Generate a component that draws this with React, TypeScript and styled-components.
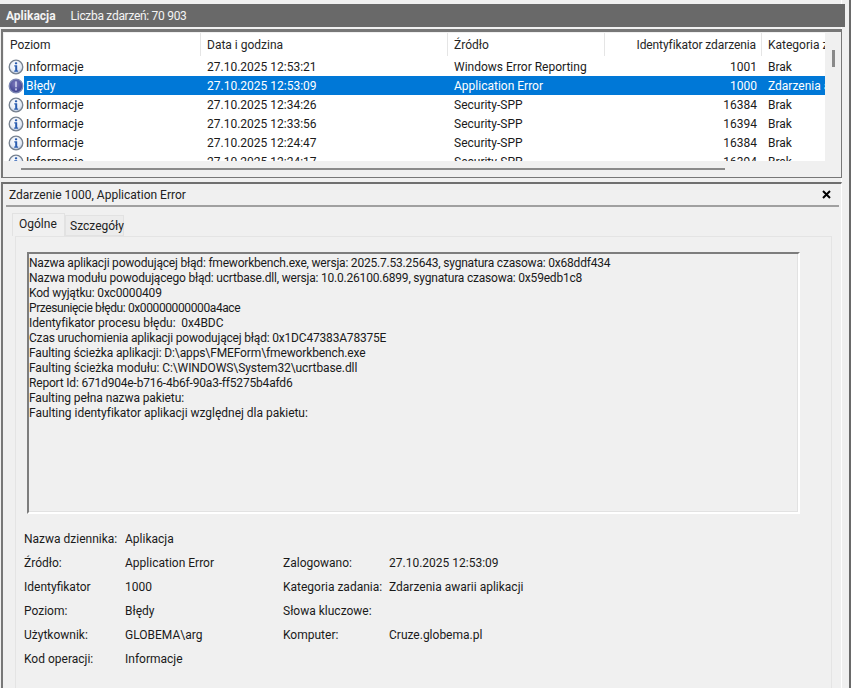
import React from "react";
import styled, { createGlobalStyle } from "styled-components";

const Global = createGlobalStyle`
  html, body { margin: 0; padding: 0; background: #f0f0f0; }
  body { font-family: Roboto, "Noto Sans", "Liberation Sans", sans-serif; font-size: 12px; color: #1a1a1a; }
`;

const Page = styled.div`
  width: 851px;
  height: 688px;
  overflow: hidden;
  background: #f0f0f0;
  display: flex;
  flex-direction: column;
  padding: 4px 6px 0 0;
  box-sizing: border-box;
  border-right: 2px solid #6a6a6a;
  box-shadow: inset -7px 0 0 #f0f0f0, inset -8px 0 0 #fff;
`;

const TitleBar = styled.div`
  height: 23px;
  flex: none;
  background: #696969;
  color: #f4f4f4;
  display: flex;
  align-items: center;
  padding-left: 6px;
  gap: 15px;
  margin-right: -2px;
`;

const TitleStrong = styled.span`
  font-weight: 700;
`;

const TitleCount = styled.span`
  letter-spacing: -0.3px;
`;

const ListPanel = styled.section`
  flex: none;
  height: 149px;
  margin: 2px 1px 0 1px;
  border: 1px solid #777;
  border-top-width: 3px;
  border-left-width: 2px;
  box-sizing: border-box;
  padding: 1px 0 0 1px;
  display: flex;
  flex-direction: column;
`;

const ListRow = styled.div`
  display: flex;
  height: 128px;
  flex: none;
`;

const List = styled.div`
  width: 821px;
  background: #fff;
  overflow: hidden;
  flex: none;
`;

const Header = styled.div`
  display: grid;
  grid-template-columns: 197px 247px 157px 157px 120px;
  height: 24px;
`;

const HeadCell = styled.div<{ $right?: boolean }>`
  height: 23px;
  line-height: 23px;
  padding: ${(p) => (p.$right ? "1px 5px 0 0" : "1px 0 0 6px")};
  text-align: ${(p) => (p.$right ? "right" : "left")};
  letter-spacing: ${(p) => (p.$right ? "-0.09px" : "0")};
  border-right: 1px solid #e5e5e5;
  white-space: nowrap;
  box-sizing: border-box;
  color: #262626;
`;

const Row = styled.div`
  display: flex;
  height: 19px;
  padding-left: 4px;
`;

const IconSlot = styled.div`
  width: 16px;
  height: 19px;
  flex: none;
  display: flex;
  align-items: center;
  justify-content: center;
`;

const Cells = styled.div<{ $sel?: boolean }>`
  display: grid;
  grid-template-columns: 177px 247px 157px 157px 60px;
  flex: 1;
  padding-top: 1px;
  line-height: 18px;
  background: ${(p) => (p.$sel ? "#0078d7" : "transparent")};
  color: ${(p) => (p.$sel ? "#fff" : "#1a1a1a")};
`;

const Cell = styled.div<{ $right?: boolean; $first?: boolean }>`
  white-space: nowrap;
  padding: ${(p) => (p.$right ? "0 5px 0 0" : p.$first ? "0 0 0 2px" : "0 0 0 6px")};
  text-align: ${(p) => (p.$right ? "right" : "left")};
`;

const ScrollTrack = styled.div`
  width: 15px;
  flex: none;
  position: relative;
`;

const ScrollThumb = styled.div`
  position: absolute;
  left: 7px;
  top: 17px;
  width: 3px;
  height: 17px;
  background: #8a8a8a;
`;

const HScrollWrap = styled.div`
  flex: none;
  padding: 7px 0 0 17px;
`;

const HThumb = styled.div`
  width: 704px;
  height: 2px;
  background: #8a8a8a;
`;

const DetailPanel = styled.section`
  flex: 1;
  margin: 4px 1px 0 1px;
  border-top: 2px solid #6f6f6f;
  border-left: 2px solid #777;
  border-right: 1px solid #fff;
  display: flex;
  flex-direction: column;
  min-height: 0;
`;

const DetailHead = styled.div`
  flex: none;
  height: 23px;
  margin: 0 2px 0 3px;
  box-sizing: border-box;
  border-bottom: 2px solid #a0a0a0;
  display: flex;
  justify-content: space-between;
  align-items: center;
  padding: 0 8px 0 3px;
  color: #222;
`;

const Tabs = styled.div`
  flex: none;
  display: flex;
  margin: 6px 0 0 9px;
  height: 23px;
  align-items: flex-end;
`;

const Tab = styled.div<{ $active?: boolean }>`
  width: ${(p) => (p.$active ? 53 : 59)}px;
  height: ${(p) => (p.$active ? 23 : 21)}px;
  line-height: ${(p) => (p.$active ? 21 : 20)}px;
  padding-left: ${(p) => (p.$active ? 6 : 4)}px;
  background: ${(p) => (p.$active ? "#f0f0f0" : "#ececec")};
  border: 1px solid #e2e2e2;
  border-bottom: ${(p) => (p.$active ? "none" : "1px solid #e2e2e2")};
  box-sizing: border-box;
  color: #222;
`;

const TabBody = styled.div`
  flex: none;
  margin-left: 12px;
  width: 817px;
  height: 460px;
  box-sizing: border-box;
  border: 1px solid #e4e4e4;
  padding: 15px 0 0 11px;
`;

const MessageBox = styled.div`
  width: 773px;
  height: 262px;
  box-sizing: border-box;
  border-top: 2px solid #7d7d7d;
  border-left: 2px solid #7d7d7d;
  border-right: 2px solid #fff;
  border-bottom: 2px solid #fff;
  box-shadow: inset -1px -1px 0 #e2e2e2;
  padding-top: 2px;
  line-height: 15px;
  color: #1a1a1a;
`;

const MessageLine = styled.div<{ $track: number }>`
  white-space: pre;
  letter-spacing: ${(p) => p.$track}px;
`;

const Meta = styled.div`
  display: grid;
  grid-template-columns: 101px 158px 106px 1fr;
  grid-auto-rows: 24px;
  margin: 13px 0 0 -3px;
  line-height: 24px;
  color: #1a1a1a;
`;

const MetaText = styled.div`
  white-space: nowrap;
`;

const InfoIcon = () => (
  <svg width="16" height="16" viewBox="0 0 16 16">
    <defs>
      <radialGradient id="inf" cx="45%" cy="35%" r="70%">
        <stop offset="0%" stopColor="#ffffff" />
        <stop offset="60%" stopColor="#e6ecf6" />
        <stop offset="100%" stopColor="#b4c5e0" />
      </radialGradient>
    </defs>
    <circle cx="8" cy="8" r="6.8" fill="url(#inf)" stroke="#76818f" strokeWidth="1.3" />
    <rect x="6.9" y="3.2" width="2.3" height="2.1" rx="0.9" fill="#2a5cb0" />
    <path d="M6.3 6.3h2.9v5.2h.9v1.2H6.2v-1.2h1V7.4h-.9z" fill="#2a5cb0" />
  </svg>
);

const ErrorIcon = () => (
  <svg width="16" height="16" viewBox="0 0 16 16">
    <defs>
      <radialGradient id="err" cx="45%" cy="35%" r="70%">
        <stop offset="0%" stopColor="#7b78bb" />
        <stop offset="70%" stopColor="#4a4c98" />
        <stop offset="100%" stopColor="#3a3e7c" />
      </radialGradient>
    </defs>
    <circle cx="8" cy="8" r="6.8" fill="url(#err)" stroke="#7b86b4" strokeWidth="1.3" />
    <rect x="7.1" y="3.4" width="1.8" height="5.8" fill="#c4c6e6" />
    <rect x="7.1" y="10.4" width="1.8" height="2" fill="#c4c6e6" />
  </svg>
);

const CloseIcon = () => (
  <svg width="9" height="9" viewBox="0 0 9 9">
    <path d="M1 1l7 7M8 1L1 8" stroke="#000" strokeWidth="2" fill="none" />
  </svg>
);

const rows = [
  { lvl: "Informacje", date: "27.10.2025 12:53:21", src: "Windows Error Reporting", id: "1001", cat: "Brak" },
  { lvl: "Błędy", date: "27.10.2025 12:53:09", src: "Application Error", id: "1000", cat: "Zdarzenia awarii aplikacji", sel: true },
  { lvl: "Informacje", date: "27.10.2025 12:34:26", src: "Security-SPP", id: "16384", cat: "Brak" },
  { lvl: "Informacje", date: "27.10.2025 12:33:56", src: "Security-SPP", id: "16394", cat: "Brak" },
  { lvl: "Informacje", date: "27.10.2025 12:24:47", src: "Security-SPP", id: "16384", cat: "Brak" },
  { lvl: "Informacje", date: "27.10.2025 12:24:17", src: "Security-SPP", id: "16394", cat: "Brak" },
];

const message: [string, number][] = [
  ["Nazwa aplikacji powodującej błąd: fmeworkbench.exe, wersja: 2025.7.53.25643, sygnatura czasowa: 0x68ddf434", -0.2],
  ["Nazwa modułu powodującego błąd: ucrtbase.dll, wersja: 10.0.26100.6899, sygnatura czasowa: 0x59edb1c8", -0.2],
  ["Kod wyjątku: 0xc0000409", -0.17],
  ["Przesunięcie błędu: 0x00000000000a4ace", -0.39],
  ["Identyfikator procesu błędu:  0x4BDC", -0.08],
  ["Czas uruchomienia aplikacji powodującej błąd: 0x1DC47383A78375E", -0.19],
  ["Faulting ścieżka aplikacji: D:\\apps\\FMEForm\\fmeworkbench.exe", -0.12],
  ["Faulting ścieżka modułu: C:\\WINDOWS\\System32\\ucrtbase.dll", -0.09],
  ["Report Id: 671d904e-b716-4b6f-90a3-ff5275b4afd6", -0.19],
  ["Faulting pełna nazwa pakietu:", -0.1],
  ["Faulting identyfikator aplikacji względnej dla pakietu:", -0.02],
];

const meta = [
  ["Nazwa dziennika:", "Aplikacja", "", ""],
  ["Źródło:", "Application Error", "Zalogowano:", "27.10.2025 12:53:09"],
  ["Identyfikator", "1000", "Kategoria zadania:", "Zdarzenia awarii aplikacji"],
  ["Poziom:", "Błędy", "Słowa kluczowe:", ""],
  ["Użytkownik:", "GLOBEMA\\arg", "Komputer:", "Cruze.globema.pl"],
  ["Kod operacji:", "Informacje", "", ""],
];

export default function App() {
  return (
    <Page>
      <Global />
      <TitleBar>
        <TitleStrong>Aplikacja</TitleStrong>
        <TitleCount>Liczba zdarzeń: 70 903</TitleCount>
      </TitleBar>
      <ListPanel>
        <ListRow>
          <List>
            <Header>
              <HeadCell>Poziom</HeadCell>
              <HeadCell>Data i godzina</HeadCell>
              <HeadCell>Źródło</HeadCell>
              <HeadCell $right>Identyfikator zdarzenia</HeadCell>
              <HeadCell>Kategoria zadania</HeadCell>
            </Header>
            {rows.map((r) => (
              <Row key={r.date}>
                <IconSlot>{r.sel ? <ErrorIcon /> : <InfoIcon />}</IconSlot>
                <Cells $sel={r.sel}>
                  <Cell $first>{r.lvl}</Cell>
                  <Cell>{r.date}</Cell>
                  <Cell>{r.src}</Cell>
                  <Cell $right>{r.id}</Cell>
                  <Cell>{r.cat}</Cell>
                </Cells>
              </Row>
            ))}
          </List>
          <ScrollTrack>
            <ScrollThumb />
          </ScrollTrack>
        </ListRow>
        <HScrollWrap>
          <HThumb />
        </HScrollWrap>
      </ListPanel>
      <DetailPanel>
        <DetailHead>
          <span>Zdarzenie 1000, Application Error</span>
          <CloseIcon />
        </DetailHead>
        <Tabs>
          <Tab $active>Ogólne</Tab>
          <Tab>Szczegóły</Tab>
        </Tabs>
        <TabBody>
          <MessageBox>
            {message.map(([text, track]) => (
              <MessageLine key={text} $track={track}>{text}</MessageLine>
            ))}
          </MessageBox>
          <Meta>
            {meta.flat().map((t, i) => (
              <MetaText key={i}>{t}</MetaText>
            ))}
          </Meta>
        </TabBody>
      </DetailPanel>
    </Page>
  );
}
